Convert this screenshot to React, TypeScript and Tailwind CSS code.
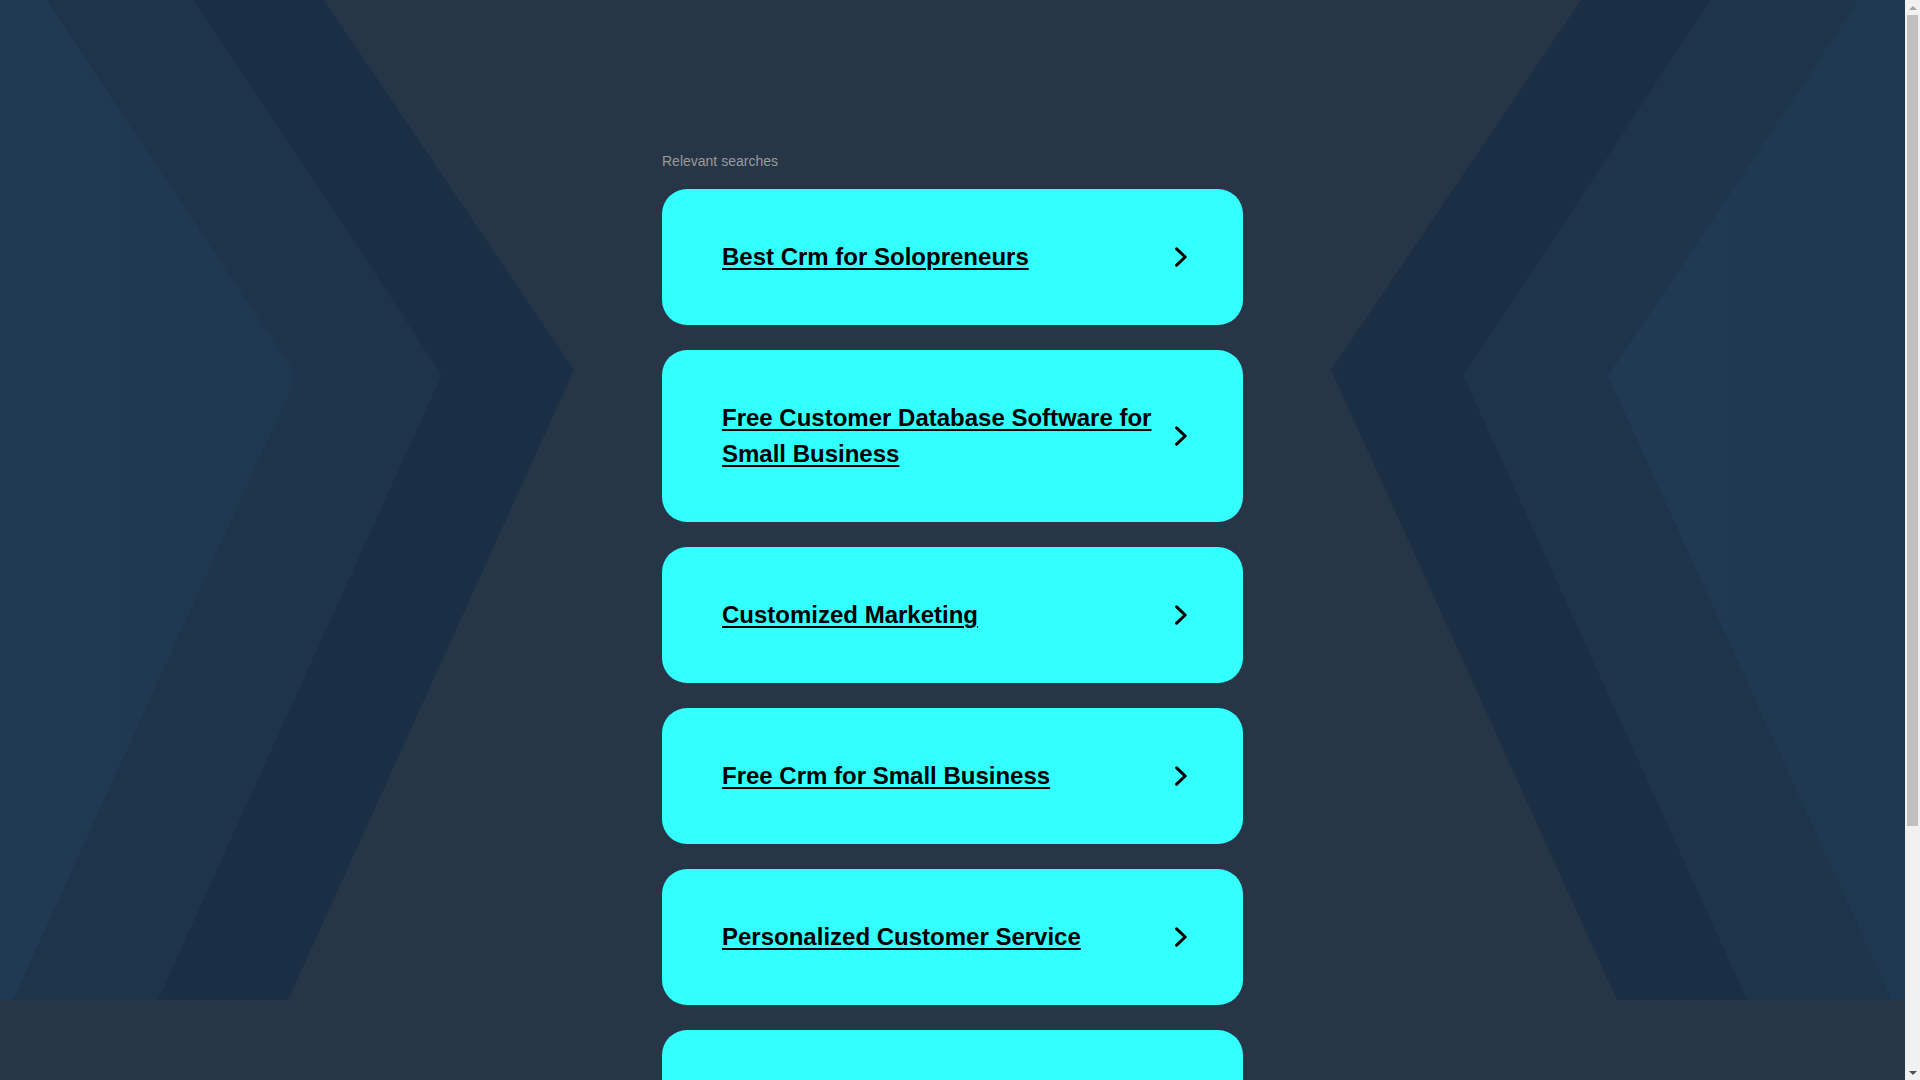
const searches = [
  "Best Crm for Solopreneurs",
  "Free Customer Database Software for Small Business",
  "Customized Marketing",
  "Free Crm for Small Business",
  "Personalized Customer Service",
  "Crm Software for Small Business",
];

function Chevron() {
  return (
    <svg
      className="shrink-0 w-[12px] h-[20px]"
      viewBox="0 0 12 20"
      fill="none"
      stroke="#000"
      strokeWidth="3"
      strokeLinecap="round"
      strokeLinejoin="round"
    >
      <path d="M1.6 1.8 L10.2 10 L1.6 18.2" />
    </svg>
  );
}

function Background() {
  // chevron bands on both sides, mirrored about the middle
  const W = 1905;
  const outer = [[0, 0], [324, 0], [574, 370], [288, 1000], [0, 1000]];
  const middle = [[0, 0], [194, 0], [442, 375], [158, 1000], [0, 1000]];
  const inner = [[0, 0], [46, 0], [297, 376], [13, 1000], [0, 1000]];
  const pts = (p: number[][], flip: boolean) =>
    p.map(([x, y]) => `${flip ? W - x : x},${y}`).join(" ");
  return (
    <svg
      className="absolute top-0 left-0 w-full h-[1000px]"
      viewBox="0 0 1905 1000"
      preserveAspectRatio="none"
    >
      <defs>
        <linearGradient id="gl" x1="0" y1="0" x2="1" y2="0">
          <stop offset="0" stopColor="#1f3a52" />
          <stop offset="1" stopColor="#1e384f" />
        </linearGradient>
      </defs>
      {[false, true].map((flip) => (
        <g key={String(flip)}>
          <polygon points={pts(outer, flip)} fill="#1a2f45" />
          <polygon points={pts(middle, flip)} fill="#1d344b" />
          <polygon points={pts(inner, flip)} fill="url(#gl)" />
        </g>
      ))}
    </svg>
  );
}

function Scrollbar() {
  return (
    <div className="w-[15px] shrink-0 flex flex-col bg-[#f1f1f1]">
      <div className="h-[15px] flex items-center justify-center">
        <svg className="w-[8px] h-[4px]" viewBox="0 0 8 4">
          <polygon points="0,4 4,0 8,4" fill="#a3a3a3" />
        </svg>
      </div>
      <div className="mx-[2px] h-[811px] bg-[#c1c1c1]" />
      <div className="flex-1" />
      <div className="h-[15px] flex items-center justify-center">
        <svg className="w-[8px] h-[4px]" viewBox="0 0 8 4">
          <polygon points="0,0 8,0 4,4" fill="#505050" />
        </svg>
      </div>
    </div>
  );
}

export default function App() {
  return (
    <div className="flex h-screen overflow-hidden font-['Liberation_Sans',Arial,sans-serif]">
      <main className="relative flex-1 overflow-hidden bg-[#273647]">
        <Background />
        <div className="relative mx-auto w-[581px] pt-[151px] pb-[240px]">
          <p className="text-[14px] leading-5 text-[#9a9a9a] mb-[18px]">
            Relevant searches
          </p>
          <div className="flex flex-col gap-[25px]">
            {searches.map((s) => (
              <a
                key={s}
                href="#"
                className="flex items-center rounded-[25px] bg-[#33ffff] pl-[60px] pr-[56px] py-[50px]"
              >
                <span className="flex-1 text-[24px] leading-[36px] font-bold text-black underline underline-offset-[3px] decoration-2">
                  {s}
                </span>
                <span className="ml-[20px] flex">
                  <Chevron />
                </span>
              </a>
            ))}
          </div>
        </div>
      </main>
      <Scrollbar />
    </div>
  );
}
